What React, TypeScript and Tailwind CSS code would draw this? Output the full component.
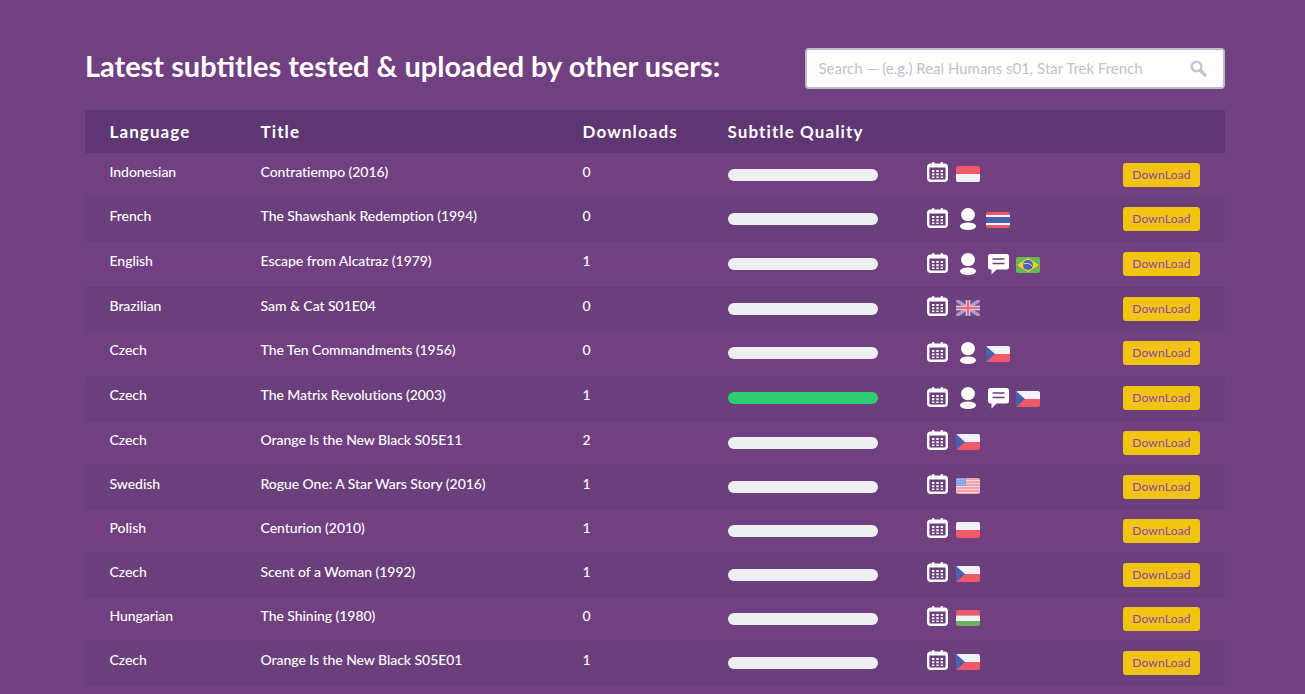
type FlagName = 'id' | 'th' | 'br' | 'gb' | 'cz' | 'us' | 'pl' | 'hu';

type Row = {
  language: string;
  title: string;
  downloads: number;
  good?: boolean;
  person?: boolean;
  chat?: boolean;
  flag: FlagName;
};

const rows: Row[] = [
  { language: 'Indonesian', title: 'Contratiempo (2016)', downloads: 0, flag: 'id' },
  { language: 'French', title: 'The Shawshank Redemption (1994)', downloads: 0, person: true, flag: 'th' },
  { language: 'English', title: 'Escape from Alcatraz (1979)', downloads: 1, person: true, chat: true, flag: 'br' },
  { language: 'Brazilian', title: 'Sam & Cat S01E04', downloads: 0, flag: 'gb' },
  { language: 'Czech', title: 'The Ten Commandments (1956)', downloads: 0, person: true, flag: 'cz' },
  { language: 'Czech', title: 'The Matrix Revolutions (2003)', downloads: 1, good: true, person: true, chat: true, flag: 'cz' },
  { language: 'Czech', title: 'Orange Is the New Black S05E11', downloads: 2, flag: 'cz' },
  { language: 'Swedish', title: 'Rogue One: A Star Wars Story (2016)', downloads: 1, flag: 'us' },
  { language: 'Polish', title: 'Centurion (2010)', downloads: 1, flag: 'pl' },
  { language: 'Czech', title: 'Scent of a Woman (1992)', downloads: 1, flag: 'cz' },
  { language: 'Hungarian', title: 'The Shining (1980)', downloads: 0, flag: 'hu' },
  { language: 'Czech', title: 'Orange Is the New Black S05E01', downloads: 1, flag: 'cz' },
];

const RED = '#f1596a';
const WHITE = '#f2f3f7';
const BLUE = '#4a5fae';

function FlagArt({ name }: { name: FlagName }) {
  switch (name) {
    case 'id':
      return (
        <>
          <rect width="24" height="8" fill={RED} />
          <rect y="8" width="24" height="8" fill={WHITE} />
        </>
      );
    case 'pl':
      return (
        <>
          <rect width="24" height="8" fill={WHITE} />
          <rect y="8" width="24" height="8" fill={RED} />
        </>
      );
    case 'th':
      return (
        <>
          <rect width="24" height="16" fill={RED} />
          <rect y="3" width="24" height="10" fill={WHITE} />
          <rect y="5" width="24" height="6" fill={BLUE} />
        </>
      );
    case 'hu':
      return (
        <>
          <rect width="24" height="5.5" fill={RED} />
          <rect y="5.5" width="24" height="5.5" fill={WHITE} />
          <rect y="11" width="24" height="5" fill="#6bb05c" />
        </>
      );
    case 'cz':
      return (
        <>
          <rect width="24" height="8" fill={WHITE} />
          <rect y="8" width="24" height="8" fill={RED} />
          <path d="M0 0L9 8L0 16Z" fill={BLUE} />
        </>
      );
    case 'br':
      return (
        <>
          <rect width="24" height="16" fill="#69b84e" />
          <path d="M12 1L23 8L12 15L1 8Z" fill="#f4cf45" />
          <circle cx="12" cy="8" r="5" fill={BLUE} />
          <path d="M7.4 7a8 8 0 0 1 9.2 2.6" stroke={WHITE} strokeWidth="0.8" fill="none" />
        </>
      );
    case 'gb':
      return (
        <>
          <rect width="24" height="16" fill={BLUE} />
          <path d="M0 0L24 16M24 0L0 16" stroke="#c9a9c9" strokeWidth="3" />
          <path d="M0 0L24 16M24 0L0 16" stroke="#ec7488" strokeWidth="1" />
          <path d="M12 0V16M0 8H24" stroke="#e6dbe6" strokeWidth="4.5" />
          <path d="M12 0V16M0 8H24" stroke="#ee6a7e" strokeWidth="2.5" />
        </>
      );
    case 'us':
      return (
        <>
          <rect width="24" height="16" fill="#f6a0ab" />
          <path d="M0 2.5H24M0 5.5H24M0 8.5H24M0 11.5H24M0 14.5H24" stroke="#f8d5da" strokeWidth="1.2" />
          <rect width="10" height="8" fill="#7fa4e6" />
          <path d="M1.5 1.5H9M1.5 4H9M1.5 6.5H9" stroke="#bcd0f3" strokeWidth="1" strokeDasharray="1 1" />
        </>
      );
  }
}

function Flag({ name }: { name: FlagName }) {
  return (
    <svg width="24" height="16" viewBox="0 0 24 16" className="shrink-0 rounded-[2px] overflow-hidden">
      <FlagArt name={name} />
    </svg>
  );
}

function CalendarIcon() {
  return (
    <svg width="21" height="20" viewBox="0 0 21 20" className="shrink-0 mb-1">
      <rect x="1.2" y="2.7" width="18.6" height="16.1" rx="2.5" fill="none" stroke="#fff" strokeWidth="2.4" />
      <rect x="1" y="2" width="19" height="3.5" rx="1.5" fill="#fff" />
      <rect x="5" y="0" width="2.4" height="4" rx="1" fill="#fff" />
      <rect x="13.6" y="0" width="2.4" height="4" rx="1" fill="#fff" />
      <path d="M5 8H7.4V10H5ZM9.3 8H11.7V10H9.3ZM13.6 8H16V10H13.6ZM5 11.3H7.4V13.3H5ZM9.3 11.3H11.7V13.3H9.3ZM13.6 11.3H16V13.3H13.6ZM5 14.4H7.4V16H5ZM9.3 14.4H11.7V16H9.3ZM13.6 14.4H16V16H13.6Z" fill="#fff" />
    </svg>
  );
}

function PersonIcon() {
  return (
    <svg width="16" height="22" viewBox="0 0 16 22" className="shrink-0 ml-[12px] mb-[1px]">
      <ellipse cx="8" cy="6.6" rx="7" ry="6.6" fill="#fff" />
      <ellipse cx="8" cy="18.2" rx="8" ry="3.8" fill="#fff" />
    </svg>
  );
}

function ChatIcon() {
  return (
    <svg width="21" height="21" viewBox="0 0 21 21" className="shrink-0 ml-[12px] mb-[1px]">
      <path d="M2.5 0H18.5A2.5 2.5 0 0 1 21 2.5V13A2.5 2.5 0 0 1 18.5 15.5H8.5L3.5 20.5V15.5H2.5A2.5 2.5 0 0 1 0 13V2.5A2.5 2.5 0 0 1 2.5 0Z" fill="#fff" />
      <path d="M4.5 5H16.5M4.5 9.5H16.5" stroke="#6a3f7b" strokeWidth="1.6" />
    </svg>
  );
}

function SearchIcon() {
  return (
    <svg width="17" height="17" viewBox="0 0 17 17" className="shrink-0">
      <circle cx="6.5" cy="6.5" r="4.8" fill="none" stroke="#c3c8d0" strokeWidth="2.6" />
      <path d="M10.5 10.5L15 15" stroke="#c3c8d0" strokeWidth="3.4" strokeLinecap="round" />
    </svg>
  );
}

function TableRow({ row, index }: { row: Row; index: number }) {
  const tall = row.person;
  return (
    <div
      className={`flex items-center pl-[24.5px] pr-[25px] ${tall ? 'h-[45px] pb-[1px]' : 'h-[44px]'} ${
        index % 2 === 1 ? 'bg-[#6a3f7b] border-y border-[#673c78]' : ''
      }`}
    >
      <div className="w-[151px] shrink-0 pb-[6px] text-[14px] font-medium leading-5 tracking-[-0.05px] text-white">{row.language}</div>
      <div className="w-[322px] shrink-0 pb-[6px] text-[14px] font-medium leading-5 tracking-[-0.05px] text-white">{row.title}</div>
      <div className="w-[145px] shrink-0 pb-[6px] text-[14px] font-medium leading-5 text-white">{row.downloads}</div>
      <div className="w-[199.5px] shrink-0">
        <div className={`h-3 w-[150px] rounded-full ${row.good ? 'bg-[#2ecc71]' : 'bg-[#eeeff1]'}`} />
      </div>
      <div className={`flex grow items-center ${tall ? 'pt-[1px]' : 'pb-[2px]'}`}>
        <CalendarIcon />
        {row.person && <PersonIcon />}
        {row.chat && <ChatIcon />}
        <span className={row.person ? (row.chat ? 'ml-[7px]' : 'ml-[10px]') : 'ml-[8px]'}>
          <Flag name={row.flag} />
        </span>
      </div>
      <button className="h-6 w-[77px] shrink-0 rounded-[3px] bg-[#f1c40f] text-[12px] tracking-[0.2px] text-[#8e44ad]">
        DownLoad
      </button>
    </div>
  );
}

export default function App() {
  return (
    <div className="min-h-[694px] bg-[#714081] font-['Lato','Open_Sans',sans-serif]">
      <div className="mx-[85px] w-[1140px] pt-[48px]">
        <div className="flex h-[62px] items-start justify-between">
          <h1 className="text-[28.95px] font-bold leading-[36px] text-white">Latest subtitles tested &amp; uploaded by other users:</h1>
          <div className="flex h-[41px] w-[420px] items-center justify-between rounded-[4px] border-2 border-[#b9bdc6] bg-white pl-[11.5px] pr-[16px]">
            <span className="text-[15px] tracking-[-0.01px] text-[#bcc3cd]">Search — (e.g.) Real Humans s01, Star Trek French</span>
            <SearchIcon />
          </div>
        </div>

        <div className="flex h-[43px] items-center bg-[#5e3671] pl-[24.5px] text-[17px] font-bold tracking-[1.1px] text-white">
          <div className="w-[151px]">Language</div>
          <div className="w-[322px]">Title</div>
          <div className="w-[145px]">Downloads</div>
          <div>Subtitle Quality</div>
        </div>

        <div>
          {rows.map((row, i) => (
            <TableRow key={i} row={row} index={i} />
          ))}
        </div>
      </div>
    </div>
  );
}
